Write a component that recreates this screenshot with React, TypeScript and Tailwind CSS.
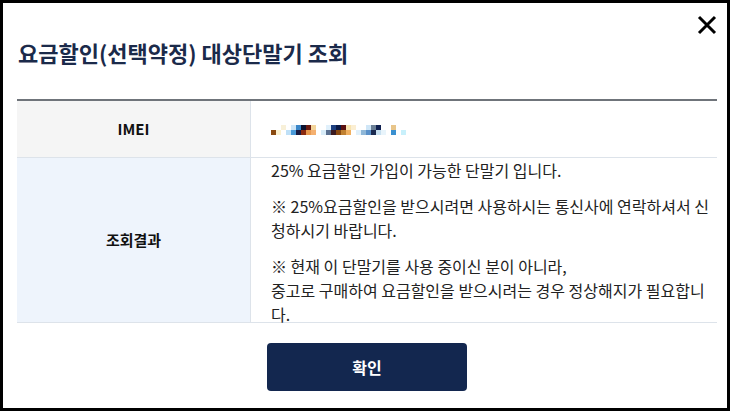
import React from 'react';

const font = { fontFamily: '"Noto Sans CJK KR", "Noto Sans", sans-serif' };

// 가려진 IMEI (모자이크)
const top = ['', '', '#f8f0d8', '', '#cfe6f7', '#3a86c8', '#0b1230', '#6a1a10', '#f3d49a', '', '', '#e0f0fb', '#1d3f80', '#0a1844', '#5a1010', '#f7e3b0', '#fbeed2', '', '', '#cfe6f7', '#6b7f95', '#102050', '', '', '#e8c58a', '', '', ''];
const bottom = ['#8a4a10', '#fbf1d0', '', '#bfe0f7', '#4a9ad8', '#1a1a40', '#8a2a10', '#e89a50', '#f4b070', '', '#d8ecf8', '#5a7090', '#3a1a20', '#8a4a10', '#c08030', '#f0b060', '', '#e0f0fb', '#90b8d8', '#5a90c8', '#1a2a50', '#c8e0f0', '#e8f4fb', '', '#3a90d0', '', '#c8f0fb', ''];

const Mosaic: React.FC = () => (
  <div className="flex flex-col">
    {[top, bottom].map((row, i) => (
      <div key={i} className="flex">
        {row.map((c, j) => (
          <div key={j} className="w-[5px] h-[5px]" style={{ backgroundColor: c || 'transparent' }} />
        ))}
      </div>
    ))}
  </div>
);

const App: React.FC = () => {
  return (
    <div className="w-[730px] h-[411px] bg-black p-[3px]" style={font}>
      <div className="w-full h-full bg-white flex flex-col">
        {/* 헤더 */}
        <div className="relative h-[96px] pl-[15px] pt-[33px]">
          <h1 className="text-[22px] font-bold leading-[32px] text-[#1b2a4a]">요금할인(선택약정) 대상단말기 조회</h1>
          <button className="absolute right-[10px] top-[12px] w-[20px] h-[20px]">
            <svg viewBox="0 0 20 20" width="20" height="20">
              <path d="M2 2 L18 18 M18 2 L2 18" stroke="#000" strokeWidth="3" />
            </svg>
          </button>
        </div>

        <div className="ml-[14px] mr-[10px] flex flex-col">
          {/* 테이블 */}
          <div className="border-t-2 border-[#6f747a]">
            <div className="flex h-[57px] border-b border-[#dde3ea]">
              <div className="w-[234px] shrink-0 bg-[#f5f5f5] border-r border-[#dde3ea] flex items-center justify-center text-[15px] font-bold text-[#111]">
                IMEI
              </div>
              <div className="flex-1 flex items-center pl-[20px] pt-[2px]">
                <Mosaic />
              </div>
            </div>
            <div className="flex h-[165px] border-b border-[#dde3ea]">
              <div className="w-[234px] shrink-0 bg-[#eef4fc] border-r border-[#dde3ea] flex items-center justify-center text-[15px] font-bold text-[#111]">
                조회결과
              </div>
              <div className="flex-1 pl-[20px] pr-[6px] text-[16px] leading-[24px] text-[#222] break-all">
                <p>25% 요금할인 가입이 가능한 단말기 입니다.</p>
                <p className="mt-[12px]">※ 25%요금할인을 받으시려면 사용하시는 통신사에 연락하셔서 신청하시기 바랍니다.</p>
                <p className="mt-[12px]">
                  ※ 현재 이 단말기를 사용 중이신 분이 아니라,
                  <br />
                  중고로 구매하여 요금할인을 받으시려는 경우 정상해지가 필요합니다.
                </p>
              </div>
            </div>
          </div>

          {/* 버튼 */}
          <div className="flex justify-center pt-[20px]">
            <button className="w-[200px] h-[48px] rounded-[4px] bg-[#13274f] text-white text-[16px] font-bold">확인</button>
          </div>
        </div>
      </div>
    </div>
  );
};

export default App;
